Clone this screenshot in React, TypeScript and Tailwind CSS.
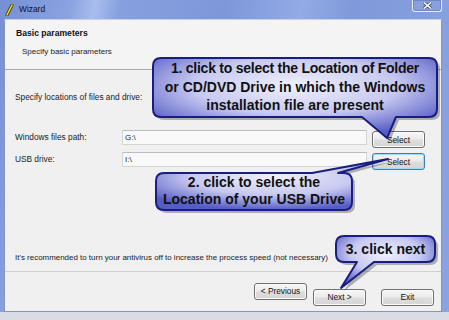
import React from 'react';

const ui = "font-['Liberation_Sans',Arial,sans-serif]";

function WinButton({ label, focused }: { label: string; focused?: boolean }) {
  return (
    <button
      className={`h-[17px] w-[53px] rounded-[3px] border text-[8.3px] leading-none text-[#111] ${ui} bg-[linear-gradient(to_bottom,#f6f6f6_0%,#ebebeb_48%,#dddddd_52%,#d6d6d6_100%)] ${
        focused ? 'border-[#3c7fb1] shadow-[inset_0_0_0_1px_#9fdcf7]' : 'border-[#707070] shadow-[inset_0_0_0_1px_#fbfbfb]'
      }`}
    >
      {label}
    </button>
  );
}

function PathRow({ label, value, focused }: { label: string; value: string; focused?: boolean }) {
  return (
    <div className="flex items-center h-[17px]">
      <span className="w-[107px] text-[8.3px] text-[#1a1a1a]">{label}</span>
      <div className="w-[245px] h-[15px] border border-[#d4d4d4] border-t-[#bcbcbc] bg-[#f9f9f9] flex items-center pl-[2px] text-[8px] text-[#222]">
        {value}
      </div>
      <div className="ml-[5px]">
        <WinButton label="Select" focused={focused} />
      </div>
    </div>
  );
}

// callout shapes (body + tail), drawn over the dialog
const callouts = [
  'M161 58 H429 Q437 58 437 66 V109 Q437 117 429 117 H396 L387 138 L362 117 H161 Q153 117 153 109 V66 Q153 58 161 58 Z',
  'M164 173 H312 L388 159 L338 173 H344 Q352 173 352 181 V202 Q352 210 344 210 H164 Q156 210 156 202 V181 Q156 173 164 173 Z',
  'M344 236 H427 Q435 236 435 244 V254 Q435 262 427 262 H374 L341 288 L357 262 H344 Q336 262 336 254 V244 Q336 236 344 236 Z',
];

function Callouts() {
  return (
    <svg className="absolute inset-0 pointer-events-none" width="449" height="320" viewBox="0 0 449 320">
      <defs>
        <radialGradient id="cg" cx="50%" cy="35%" r="65%">
          <stop offset="0%" stopColor="#f0f0fc" />
          <stop offset="55%" stopColor="#c6c8f0" />
          <stop offset="100%" stopColor="#565cc5" />
        </radialGradient>
      </defs>
      {callouts.map((d, i) => (
        <g key={i}>
          <path d={d} transform="translate(3 3)" fill="#000" opacity="0.28" />
          <path d={d} fill={`url(#cg)`} stroke="#1a1d80" strokeWidth="2" strokeLinejoin="round" />
        </g>
      ))}
    </svg>
  );
}

export default function App() {
  return (
    <div className={`relative w-[449px] h-[320px] overflow-hidden flex flex-col ${ui} bg-[linear-gradient(100deg,#7690d6_0%,#8aa2e0_14%,#a9bdee_19%,#86a0df_24%,#7d97d9_45%,#93abe6_60%,#7f99da_70%,#8ba3e0_100%)]`}>
      {/* Title bar */}
      <div className="h-[19px] flex items-center shrink-0 relative">
        <svg className="ml-[5px]" width="9" height="12" viewBox="0 0 9 12">
          <line x1="2" y1="11" x2="7" y2="1" stroke="#3a3000" strokeWidth="3" strokeLinecap="round" />
          <line x1="2" y1="11" x2="7" y2="1" stroke="#f5e12a" strokeWidth="1.6" strokeLinecap="round" />
        </svg>
        <span className="ml-[5px] text-[8.4px] text-[#111]">Wizard</span>
        <div className="absolute right-[7px] top-0 w-[30px] h-[12px] rounded-b-[3px] border border-t-0 border-[#e8eefa] bg-[#8aa1dc]/60 flex items-center justify-center shadow-[inset_0_0_0_1px_#6f86c4]">
          <svg width="9" height="7" viewBox="0 0 9 7">
            <path d="M1 0.5 L8 6.5 M8 0.5 L1 6.5" stroke="#3c4a6a" strokeWidth="3" />
            <path d="M1 0.5 L8 6.5 M8 0.5 L1 6.5" stroke="#ffffff" strokeWidth="1.6" />
          </svg>
        </div>
      </div>

      {/* Client area */}
      <div className="ml-[4px] mr-[7px] h-[293px] flex flex-col bg-[#f0f0f0] border border-[#8496bf] border-t-[#c7d1ea]">
        {/* Header */}
        <div className="h-[50px] bg-[#f4f4f4] pl-[11px] pt-[8px] border-b border-[#a8a8a8]">
          <div className="text-[8.6px] font-bold text-[#111] leading-[11px]">Basic parameters</div>
          <div className="pl-[6px] mt-[7px] text-[8px] text-[#222] leading-[11px]">Specify basic parameters</div>
        </div>

        {/* Body */}
        <div className="flex-1 flex flex-col pl-[10px] pt-[22px] pb-[8px] border-b border-[#d0d0d0] text-[#1a1a1a]">
          <div className="text-[8.3px] leading-[11px]">Specify locations of files and drive:</div>
          <div className="mt-[26px] flex flex-col gap-[5px]">
            <PathRow label="Windows files path:" value="G:\" />
            <PathRow label="USB drive:" value="I:\" focused />
          </div>
          <div className="mt-auto text-[7.95px] leading-[11px]">
            It's recommended to turn your antivirus off to increase the process speed (not necessary)
          </div>
        </div>

        {/* Footer */}
        <div className="h-[39px] flex items-start justify-end pt-[11px] pr-[7px] bg-[#f0f0f0]">
          <WinButton label="< Previous" />
          <div className="ml-[6px]">
            <WinButton label="Next >" />
          </div>
          <div className="ml-[15px]">
            <WinButton label="Exit" />
          </div>
        </div>
      </div>
      <div className="flex-1 bg-[#d9dce4]" />

      {/* Annotations */}
      <Callouts />
      <div className="absolute left-[153px] top-[59px] w-[284px] text-center text-[14px] font-bold leading-[18.5px] text-[#111]">
        <span className="tracking-[-0.25px]">1. click to select the Location of Folder</span>
        <br />
        or CD/DVD Drive in which the Windows
        <br />
        installation file are present
      </div>
      <div className="absolute left-[156px] top-[174px] w-[196px] text-center text-[14px] font-bold leading-[17px] text-[#111]">
        2. click to select the
        <br />
        Location of your USB Drive
      </div>
      <div className="absolute left-[336px] top-[240px] w-[99px] text-center text-[14px] font-bold leading-[18px] text-[#111]">
        3. click next
      </div>
    </div>
  );
}
